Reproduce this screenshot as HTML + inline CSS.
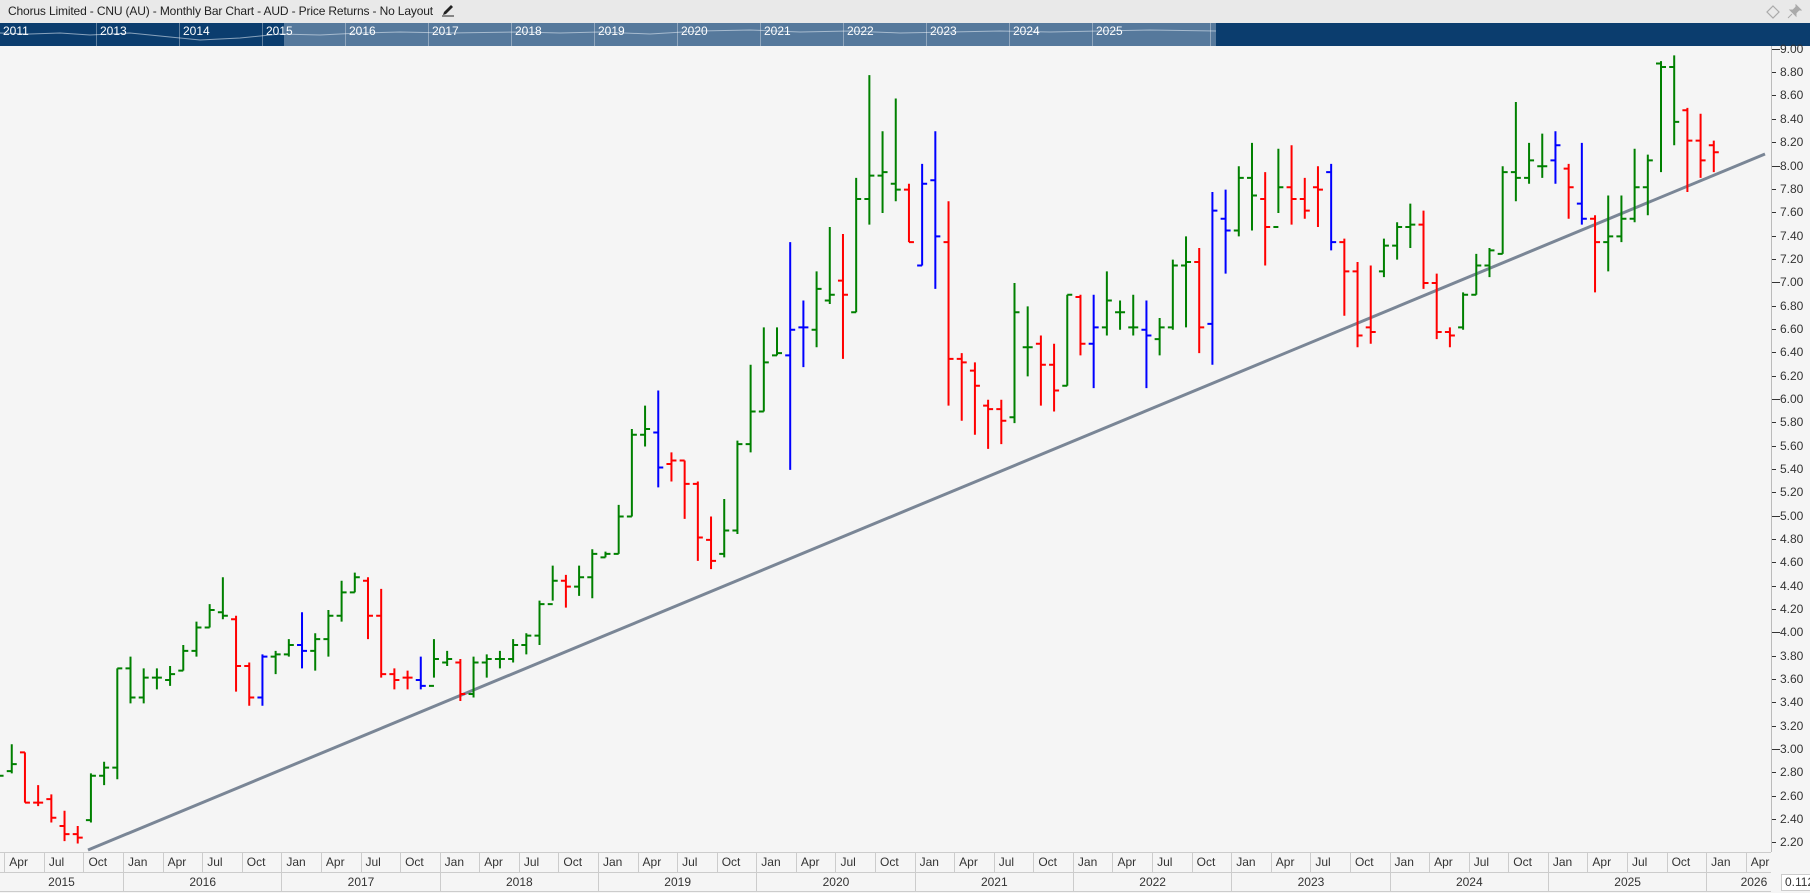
<!DOCTYPE html>
<html><head><meta charset="utf-8"><style>
*{margin:0;padding:0;box-sizing:border-box}
body{width:1810px;height:893px;overflow:hidden;background:#f5f5f5;font-family:"Liberation Sans",sans-serif;position:relative}
#title{position:absolute;left:0;top:0;width:1810px;height:23px;background:#e9e9e9;font-size:12px;letter-spacing:-0.15px;color:#222;line-height:23px;padding-left:8px}
#nav{position:absolute;left:0;top:23px;width:1810px;height:23px;background:#0b3d6e;overflow:hidden}
#nav .sel{position:absolute;left:284px;top:0;width:932px;height:23px;background:#56799c}
#nav .g{position:absolute;top:0;height:23px;border-left:1px solid rgba(255,255,255,.35);color:#fff;font-size:12px;padding-left:3px;line-height:16px}
#plabels{position:absolute;left:1772px;top:37.8px;width:38px}
#plabels div{height:23.352px;line-height:23.352px;font-size:12px;color:#333;padding-left:8px;position:relative}
#plabels div:before{content:"";position:absolute;left:0;top:11px;width:4px;height:1px;background:#333}
#plabels div.m:before{width:8px}
#axisline{position:absolute;left:1771px;top:46px;width:1px;height:806px;background:#bbb}
#months{position:absolute;left:0;top:852px;width:1771px;height:21px;border-top:1px solid #ccc;border-bottom:1px solid #ccc;display:flex;font-size:12px;color:#333;background:#f5f5f5}
#months span{display:block;width:39.582px;height:20px;border-left:1px solid #ccc;padding-left:4px;line-height:19px;flex:none}
#years{position:absolute;left:0;top:873px;width:1771px;height:19px;border-bottom:1px solid #ccc;display:flex;font-size:12px;color:#333}
#years span{display:block;width:158.33px;height:18px;border-left:1px solid #ccc;text-align:center;line-height:18px;flex:none}
#box{position:absolute;left:1781px;top:874px;width:40px;height:17px;border:1px solid #ccc;background:#fff;font-size:12px;line-height:15px;padding-left:3px;color:#333}
</style></head><body>
<div id="title">Chorus Limited - CNU (AU) - Monthly Bar Chart - AUD - Price Returns - No Layout<svg style="display:inline-block;vertical-align:-2px;margin-left:8px" width="14" height="14" viewBox="0 0 14 14"><path d="M2 12 L3 9 L10 2 L12 4 L5 11 Z" fill="#222"/><path d="M1 13 H13" stroke="#222" stroke-width="1"/></svg>
<svg style="position:absolute;left:1766px;top:5px" width="14" height="14" viewBox="0 0 14 14"><path d="M7 1 L13 7 L7 13 L1 7 Z" fill="none" stroke="#aaa" stroke-width="1.2"/></svg>
<svg style="position:absolute;left:1787px;top:4px" width="15" height="15" viewBox="0 0 15 15"><path d="M9 1 L14 6 L12 6 L9 9 L9 12 L3 6 L6 6 L9 3 Z M5 10 L1 14" fill="#aaa" stroke="#aaa" stroke-width="1"/></svg>
</div>
<div id="nav">
<div class="sel"></div>
<svg style="position:absolute;left:0;top:0" width="1810" height="23"><polyline fill="none" stroke="rgba(220,230,240,.6)" stroke-width="1" points="0,10 30,11 60,10 90,12 130,10 160,13 200,17 240,15 280,11 320,12 360,10 400,9 450,10 520,9 560,10 600,9 650,11 700,8 750,7 800,9 850,8 900,10 950,9 1000,8 1050,9 1100,8 1150,7 1216,8"/></svg>
<div class="g" style="left:0;border:none">2011</div>
<div class="g" style="left:96px">2013</div>
<div class="g" style="left:179px">2014</div>
<div class="g" style="left:262px">2015</div>
<div class="g" style="left:345px">2016</div>
<div class="g" style="left:428px">2017</div>
<div class="g" style="left:511px">2018</div>
<div class="g" style="left:594px">2019</div>
<div class="g" style="left:677px">2020</div>
<div class="g" style="left:760px">2021</div>
<div class="g" style="left:843px">2022</div>
<div class="g" style="left:926px">2023</div>
<div class="g" style="left:1009px">2024</div>
<div class="g" style="left:1092px">2025</div>
<div class="g" style="left:1210px;width:1px;padding:0"></div>
</div>
<svg id="chart" style="position:absolute;left:0;top:46px" width="1771" height="806"></svg>
<div id="axisline"></div>
<div id="plabels">
<div class="m">9.00</div><div>8.80</div><div>8.60</div><div>8.40</div><div>8.20</div><div class="m">8.00</div><div>7.80</div><div>7.60</div><div>7.40</div><div>7.20</div><div class="m">7.00</div><div>6.80</div><div>6.60</div><div>6.40</div><div>6.20</div><div class="m">6.00</div><div>5.80</div><div>5.60</div><div>5.40</div><div>5.20</div><div class="m">5.00</div><div>4.80</div><div>4.60</div><div>4.40</div><div>4.20</div><div class="m">4.00</div><div>3.80</div><div>3.60</div><div>3.40</div><div>3.20</div><div class="m">3.00</div><div>2.80</div><div>2.60</div><div>2.40</div><div>2.20</div>
</div>
<div id="months"><span style="width:4.3px;border:none;padding:0"></span><span>Apr</span><span>Jul</span><span>Oct</span><span>Jan</span><span>Apr</span><span>Jul</span><span>Oct</span><span>Jan</span><span>Apr</span><span>Jul</span><span>Oct</span><span>Jan</span><span>Apr</span><span>Jul</span><span>Oct</span><span>Jan</span><span>Apr</span><span>Jul</span><span>Oct</span><span>Jan</span><span>Apr</span><span>Jul</span><span>Oct</span><span>Jan</span><span>Apr</span><span>Jul</span><span>Oct</span><span>Jan</span><span>Apr</span><span>Jul</span><span>Oct</span><span>Jan</span><span>Apr</span><span>Jul</span><span>Oct</span><span>Jan</span><span>Apr</span><span>Jul</span><span>Oct</span><span>Jan</span><span>Apr</span><span>Jul</span><span>Oct</span><span>Jan</span><span style="width:27px">Apr</span></div>
<div id="years"><span style="width:123px;border:none">2015</span><span>2016</span><span>2017</span><span>2018</span><span>2019</span><span>2020</span><span>2021</span><span>2022</span><span>2023</span><span>2024</span><span>2025</span><span style="width:65px;text-align:right;padding-right:4px">2026</span></div>
<div id="box">0.112</div>
<script>
var D="g,2.80,2.85,2.78,2.78|g,2.82,3.05,2.80,2.88|r,2.98,2.98,2.55,2.55|r,2.55,2.70,2.52,2.55|r,2.58,2.62,2.38,2.42|r,2.35,2.48,2.22,2.28|r,2.28,2.35,2.20,2.25|g,2.40,2.80,2.38,2.78|g,2.78,2.90,2.70,2.85|g,2.85,3.70,2.75,3.70|g,3.70,3.80,3.40,3.45|g,3.45,3.70,3.40,3.62|g,3.62,3.70,3.52,3.62|g,3.60,3.72,3.55,3.65|g,3.68,3.90,3.68,3.85|g,3.85,4.10,3.80,4.05|g,4.05,4.25,4.05,4.20|g,4.18,4.48,4.12,4.15|r,4.12,4.15,3.50,3.72|r,3.72,3.75,3.38,3.45|b,3.45,3.82,3.38,3.80|g,3.80,3.85,3.65,3.82|g,3.82,3.95,3.80,3.90|b,3.90,4.18,3.70,3.85|g,3.85,4.00,3.68,3.95|g,3.95,4.20,3.80,4.15|g,4.15,4.45,4.10,4.35|g,4.35,4.52,4.35,4.48|r,4.45,4.48,3.95,4.15|r,4.15,4.38,3.62,3.65|r,3.65,3.70,3.52,3.60|r,3.62,3.68,3.52,3.62|b,3.60,3.80,3.52,3.55|g,3.55,3.95,3.62,3.78|g,3.75,3.85,3.72,3.78|r,3.75,3.78,3.42,3.48|g,3.48,3.80,3.45,3.75|g,3.75,3.82,3.62,3.78|g,3.78,3.85,3.70,3.78|g,3.78,3.95,3.75,3.90|g,3.90,4.00,3.82,3.98|g,3.98,4.28,3.90,4.25|g,4.25,4.58,4.28,4.45|r,4.45,4.50,4.22,4.40|g,4.40,4.58,4.32,4.48|g,4.48,4.72,4.30,4.68|g,4.65,4.70,4.65,4.68|g,4.68,5.10,4.68,5.00|g,5.00,5.75,5.00,5.70|g,5.70,5.95,5.60,5.75|b,5.72,6.08,5.25,5.42|r,5.45,5.55,5.30,5.48|r,5.48,5.48,4.98,5.28|r,5.28,5.30,4.62,4.82|r,4.80,5.00,4.55,4.62|g,4.68,5.15,4.65,4.88|g,4.88,5.65,4.85,5.62|g,5.62,6.30,5.55,5.90|g,5.90,6.62,5.90,6.32|g,6.38,6.62,6.38,6.40|b,6.38,7.35,5.40,6.60|b,6.62,6.85,6.28,6.62|g,6.60,7.10,6.45,6.95|g,6.85,7.48,6.82,6.90|r,7.02,7.42,6.35,6.90|g,6.75,7.90,6.75,7.72|g,7.72,8.78,7.50,7.92|g,7.92,8.30,7.60,7.95|g,7.85,8.58,7.70,7.80|r,7.80,7.85,7.35,7.35|b,7.15,8.02,7.15,7.85|b,7.88,8.30,6.95,7.40|r,7.35,7.70,5.95,6.35|r,6.35,6.40,5.82,6.32|r,6.25,6.32,5.70,6.12|r,5.95,6.00,5.58,5.92|r,5.92,6.00,5.62,5.82|g,5.85,7.00,5.80,6.75|g,6.45,6.80,6.20,6.45|r,6.48,6.55,5.95,6.30|r,6.30,6.48,5.90,6.08|g,6.12,6.90,6.12,6.90|r,6.88,6.90,6.38,6.48|b,6.48,6.90,6.10,6.62|g,6.62,7.10,6.55,6.85|g,6.75,6.85,6.60,6.75|g,6.62,6.90,6.55,6.62|b,6.60,6.85,6.10,6.55|g,6.52,6.70,6.38,6.62|g,6.62,7.20,6.60,7.15|g,7.15,7.40,6.62,7.18|r,7.18,7.30,6.40,6.62|b,6.65,7.78,6.30,7.62|b,7.55,7.80,7.08,7.45|g,7.45,8.00,7.40,7.90|g,7.90,8.20,7.45,7.75|r,7.72,7.95,7.15,7.48|g,7.48,8.15,7.60,7.82|r,7.82,8.18,7.50,7.72|r,7.72,7.90,7.55,7.62|r,7.82,8.00,7.48,7.80|b,7.95,8.02,7.28,7.35|r,7.35,7.38,6.72,7.10|r,7.10,7.18,6.45,6.55|r,6.62,7.15,6.48,6.58|g,7.10,7.38,7.05,7.32|g,7.32,7.52,7.20,7.48|g,7.48,7.68,7.30,7.50|r,7.50,7.62,6.95,7.00|r,7.00,7.08,6.52,6.58|r,6.58,6.62,6.45,6.55|g,6.62,6.92,6.60,6.90|g,6.90,7.25,6.90,7.15|g,7.15,7.30,7.05,7.28|g,7.25,8.00,7.25,7.95|g,7.95,8.55,7.70,7.90|g,7.90,8.20,7.85,8.05|g,8.00,8.28,7.90,8.00|b,8.05,8.30,7.85,8.18|r,7.98,8.02,7.55,7.82|b,7.68,8.20,7.50,7.55|r,7.55,7.58,6.92,7.35|g,7.35,7.75,7.10,7.40|g,7.40,7.75,7.35,7.55|g,7.55,8.15,7.52,7.82|g,7.82,8.10,7.58,8.05|g,8.88,8.90,7.95,8.85|g,8.85,8.95,8.18,8.38|r,8.48,8.50,7.78,8.22|r,8.22,8.45,7.90,8.05|r,8.18,8.22,7.95,8.12".split("|");
var C={g:"#008000",r:"#ff0000",b:"#0000ff"};
function Y(p){return 3.5+(9-p)*116.76}
var s='<line x1="88" y1="804" x2="1765" y2="108" stroke="#7a8696" stroke-width="3"/>';
D.forEach(function(d,i){var a=d.split(","),m=i+2,x=123+13.194*(m-12)+7.5,c=C[a[0]];
var o=Y(+a[1]),h=Y(+a[2]),l=Y(+a[3]),cl=Y(+a[4]);
s+='<path d="M'+x+' '+h+'V'+l+'M'+(x-5)+' '+o+'H'+x+'M'+x+' '+cl+'H'+(x+5)+'" stroke="'+c+'" stroke-width="2" fill="none"/>';});
document.getElementById("chart").innerHTML=s;
</script>
</body></html>
